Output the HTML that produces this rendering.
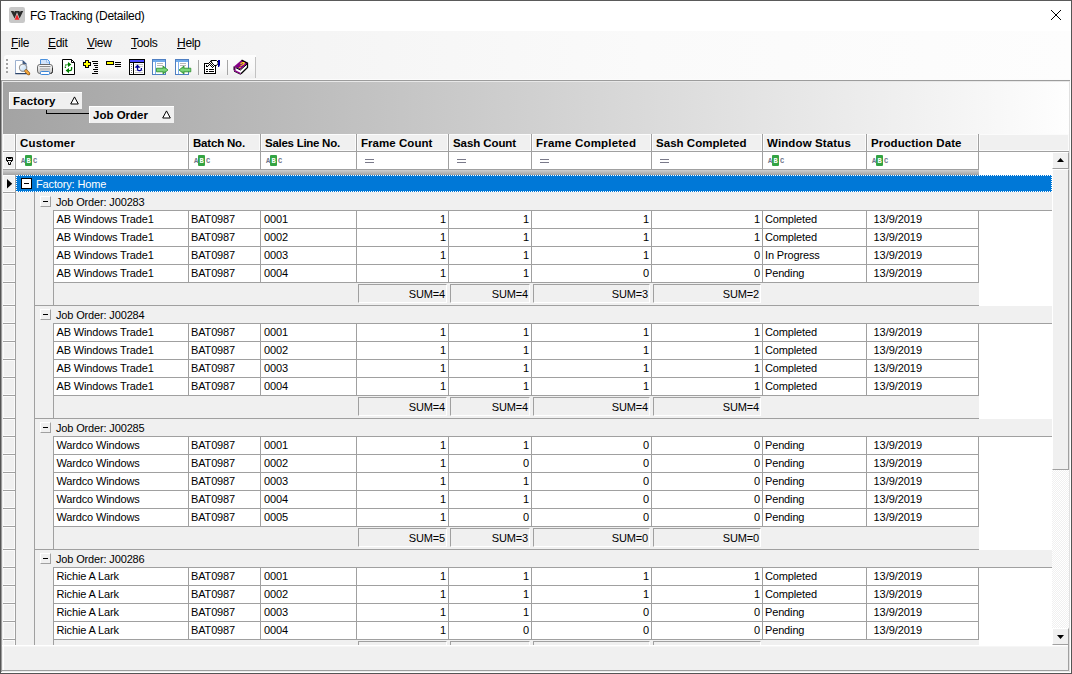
<!DOCTYPE html>
<html><head><meta charset="utf-8"><title>FG Tracking (Detailed)</title>
<style>
html,body{margin:0;padding:0;background:#fff}
#w{position:relative;width:1072px;height:674px;overflow:hidden;font-family:"Liberation Sans",sans-serif;font-size:11px;color:#000}
#w div,#w svg.a{position:absolute}
#w .t{white-space:nowrap;font-size:11px;letter-spacing:-0.15px}
#w .tb{white-space:nowrap;font-size:11.5px;font-weight:bold}
#w .ui{white-space:nowrap;font-size:12px;letter-spacing:-0.3px}
#w .abc{white-space:nowrap;font-family:"Liberation Mono",monospace;font-size:7px;line-height:11px;height:11px;color:#70748a;font-weight:bold}
#w .abc span{display:inline-block;width:4px;text-align:center;position:relative;top:1px}
#w .abc b i{font-style:normal;position:relative;top:1px}
#w .abc b{display:inline-block;width:7px;height:11px;background:#34a443;color:#fff;border-radius:1px;text-align:center;margin:0 1px 0 0}
</style></head><body><div id="w">
<div style="left:0px;top:0px;width:1072px;height:674px;background:#fff"></div>
<div style="left:1px;top:31px;width:1070px;height:49px;background:linear-gradient(90deg,#f0f0f0 0%,#f5f5f5 30%,#fafafa 60%,#fdfdfd 100%)"></div>

<svg class="a" style="left:9px;top:7px" width="16" height="16" viewBox="9 7 16 16"><rect x="9" y="7" width="16" height="16" rx="2.2" fill="#c8c8c8"/><path d="M10.8 11 H17.4 L14.6 18.6 Z M16.6 11 H23.2 L19.6 18.6 Z" fill="#2a2a2a"/><path d="M13.6 11 h1.2 l-.6 1.6z M19.4 11 h1.2 l-.6 1.6z" fill="#c8c8c8"/><path d="M17 14.2 L19.4 19.8 H14.6 Z" fill="#f0242a"/></svg>
<div class="ui" style="left:30px;top:8px;height:16px;line-height:16px;letter-spacing:-0.28px">FG Tracking (Detailed)</div>
<svg class="a" style="left:1050px;top:9px" width="12" height="12" viewBox="0 0 12 12"><path d="M1 1 L11 11 M11 1 L1 11" stroke="#000" stroke-width="1" fill="none"/></svg>


<div class="ui" style="left:11px;top:35px;height:16px;line-height:16px"><u>F</u>ile</div>
<div class="ui" style="left:48px;top:35px;height:16px;line-height:16px"><u>E</u>dit</div>
<div class="ui" style="left:87px;top:35px;height:16px;line-height:16px"><u>V</u>iew</div>
<div class="ui" style="left:131px;top:35px;height:16px;line-height:16px"><u>T</u>ools</div>
<div class="ui" style="left:177px;top:35px;height:16px;line-height:16px"><u>H</u>elp</div>

<div style="left:4px;top:55px;width:252px;height:23px;border-radius:3px 0 0 3px;background:linear-gradient(180deg,#fdfdfd,#f8f8f8 60%,#eeeeee)"></div>
<div style="left:255px;top:57px;width:1px;height:21px;background:#c2c2c2"></div>
<svg class="a" style="left:4px;top:55px" width="252" height="23" viewBox="4 55 252 23">
<defs>
<linearGradient id="gl" x1="0" y1="0" x2="1" y2="1"><stop offset="0" stop-color="#ffffff"/><stop offset="1" stop-color="#b9d9f6"/></linearGradient>
<linearGradient id="gp" x1="0" y1="0" x2="0" y2="1"><stop offset="0" stop-color="#ffffff"/><stop offset="1" stop-color="#c4c4c4"/></linearGradient>
<linearGradient id="gg" x1="0" y1="0" x2="0" y2="1"><stop offset="0" stop-color="#2f9a2f"/><stop offset=".5" stop-color="#86e086"/><stop offset="1" stop-color="#288a28"/></linearGradient>
</defs>
<!-- grip -->
<g fill="#a3a3a3"><rect x="6" y="59" width="2" height="2"/><rect x="6" y="63" width="2" height="2"/><rect x="6" y="67" width="2" height="2"/><rect x="6" y="71" width="2" height="2"/></g>
<!-- preview -->
<path d="M15.5 60.5 H23 L26.5 64 V73.5 H15.5 Z" fill="#fff" stroke="#9db1cf" stroke-width="1"/>
<path d="M15.3 73.6 H26.5 V66" fill="none" stroke="#2c456b" stroke-width="1.2"/>
<path d="M23 60.8 V64 H26.2 Z" fill="#4a6a9c" stroke="#2c456b" stroke-width=".8"/>
<circle cx="23" cy="67.8" r="3.6" fill="url(#gl)" stroke="#9a9a9a" stroke-width="1.1"/>
<path d="M26 71 L28.6 73.6" stroke="#8a5312" stroke-width="3.2" stroke-linecap="round"/>
<path d="M26 71 L28.4 73.4" stroke="#f5a83c" stroke-width="2.1" stroke-linecap="round"/>
<!-- printer -->
<path d="M40.5 66 V59.5 H47.5 L49.5 61.5 V66 Z" fill="#d3e4fa" stroke="#4a90dc" stroke-width="1"/>
<path d="M46.5 59.8 V62.2 H49.2" fill="#f2f7ff" stroke="#8db9ec" stroke-width=".8"/>
<rect x="37.5" y="64.5" width="15" height="9" rx="2.4" fill="url(#gp)" stroke="#6a6a6a" stroke-width="1"/>
<path d="M39.5 66.5 H50.5" stroke="#8a8a8a" stroke-width="1"/>
<rect x="40" y="68" width="10" height="2.4" fill="#c2c2c2"/>
<path d="M52.5 68 V71.5 Q52.5 73.5 50.5 73.5" fill="none" stroke="#333" stroke-width="1"/>
<rect x="40.5" y="71.5" width="9" height="3" rx=".8" fill="#fff" stroke="#3c86d8" stroke-width="1"/>
<!-- refresh -->
<path d="M62.5 59.5 H71.5 L74.5 62.5 V74.5 H62.5 Z" fill="#fff" stroke="#000" stroke-width="1"/>
<path d="M71.5 59.5 V62.5 H74.5" fill="none" stroke="#000" stroke-width="1"/>
<g fill="none" stroke="#008000" stroke-width="1.3"><path d="M65.4 68 V66 Q65.4 64.5 67 64.5 H68.5" stroke-dasharray="1.6 .7"/><path d="M71.6 67 V69 Q71.6 70.6 70 70.6 H68.5"/></g>
<path d="M68 62 L71.4 64.5 L68 67 Z" fill="#008000"/><path d="M69 68 L65.6 70.6 L69 73.2 Z" fill="#008000"/>
<!-- expand -->
<path d="M85 60 h4 v2 h2 v4 h-2 v2 h-4 v-2 h-2 v-4 h2 z" fill="#000"/><path d="M86 61 h2 v2 h2 v2 h-2 v2 h-2 v-2 h-2 v-2 h2 z" fill="#ffff00"/>
<g fill="#000"><rect x="92" y="61" width="6" height="1"/><rect x="93" y="63" width="5" height="1"/><rect x="94" y="65" width="4" height="1"/><rect x="95" y="67" width="3" height="1"/><rect x="93" y="69" width="5" height="1"/><rect x="94" y="71" width="4" height="1"/><rect x="92" y="73" width="6" height="1"/></g>
<!-- collapse -->
<rect x="106" y="61" width="8" height="4" fill="#000"/><rect x="107" y="62" width="6" height="2" fill="#ffff00"/>
<g fill="#000"><rect x="115" y="62" width="6" height="1"/><rect x="115" y="64" width="6" height="1"/><rect x="115" y="66" width="6" height="1"/></g>
<!-- window -->
<rect x="129.5" y="59.5" width="15" height="15" fill="#fff" stroke="#000" stroke-width="1"/>
<rect x="130" y="60" width="14" height="2" fill="#4a4aff"/><rect x="130" y="62" width="14" height="1" fill="#000"/><rect x="133" y="62" width="1" height="12" fill="#000"/>
<g fill="#777"><rect x="131" y="64" width="1" height="1"/><rect x="131" y="66" width="1" height="1"/><rect x="131" y="68" width="1" height="1"/><rect x="131" y="70" width="1" height="1"/><rect x="131" y="72" width="1" height="1"/></g>
<g fill="#c8c8c8"><rect x="135" y="64" width="8" height="1"/><rect x="135" y="66" width="8" height="1"/><rect x="135" y="70" width="8" height="1"/><rect x="135" y="72" width="8" height="1"/></g>
<path d="M134.6 67.8 L137.5 64.6 L140.4 67.8 Z" fill="#00009a"/><path d="M137.5 67 V69.2 Q137.5 70.6 139 70.6 H140 Q141.4 70.6 141.4 69 V68" fill="none" stroke="#00009a" stroke-width="1.3"/>
<!-- doc right -->
<rect x="152.5" y="59.5" width="13" height="15" fill="#fff" stroke="#4f7fc2" stroke-width="1"/>
<rect x="153" y="60" width="12" height="2" fill="#6faaea"/><rect x="155" y="62" width="1" height="12" fill="#7fb0ea"/>
<rect x="157" y="63" width="6" height="1" fill="#b9b9b9"/><rect x="157" y="65" width="6" height="1" fill="#b9b9b9"/>
<path d="M156.5 68.2 H163 V66 L168 70 L163 74 V71.8 H156.5 Z" fill="url(#gg)" stroke="#2c8e2c" stroke-width=".8"/>
<!-- doc left -->
<rect x="175.5" y="59.5" width="13" height="15" fill="#fff" stroke="#4f7fc2" stroke-width="1"/>
<rect x="176" y="60" width="12" height="2" fill="#6faaea"/><rect x="178" y="62" width="1" height="12" fill="#7fb0ea"/>
<rect x="180" y="63" width="6" height="1" fill="#b9b9b9"/><rect x="180" y="65" width="6" height="1" fill="#b9b9b9"/>
<path d="M190.8 68.2 H184 V66 L179 70 L184 74 V71.8 H190.8 Z" fill="url(#gg)" stroke="#2c8e2c" stroke-width=".8"/>
<!-- sep -->
<rect x="198" y="60" width="1" height="15" fill="#a6a6a6"/><rect x="227" y="60" width="1" height="15" fill="#a6a6a6"/>
<!-- properties -->
<rect x="204.5" y="63.5" width="11" height="10" fill="#fff" stroke="#000" stroke-width="1"/>
<g fill="#000"><rect x="206" y="69" width="2" height="1"/><rect x="209" y="69" width="5" height="1"/><rect x="206" y="71" width="2" height="1"/><rect x="209" y="71" width="5" height="1"/><rect x="206" y="65" width="1" height="2"/><rect x="206" y="66" width="2" height="1"/></g>
<path d="M211 60.5 H216.5 L218 62 V63.5 L216.5 65.5 H213 Z" fill="#fff" stroke="#000" stroke-width="1"/>
<path d="M207.5 65 L210.5 61 L215 65.5 L212.5 68.2 L209.5 65.5 L208.5 66.5 Z" fill="#fff"/><g fill="#000" shape-rendering="crispEdges"><rect x="210" y="61" width="1" height="1"/><rect x="209" y="62" width="1" height="1"/><rect x="211" y="62" width="1" height="1"/><rect x="208" y="63" width="1" height="1"/><rect x="210" y="63" width="1" height="1"/><rect x="212" y="63" width="1" height="1"/><rect x="209" y="64" width="1" height="1"/><rect x="211" y="64" width="1" height="1"/><rect x="213" y="64" width="1" height="1"/><rect x="208" y="65" width="1" height="1"/><rect x="210" y="65" width="1" height="1"/><rect x="212" y="65" width="1" height="1"/><rect x="214" y="65" width="1" height="1"/><rect x="211" y="66" width="1" height="1"/><rect x="213" y="66" width="1" height="1"/><rect x="212" y="67" width="1" height="1"/></g>
<path d="M218 60 h2 v5 l-1 2 h-1 z" fill="#0000a0"/>
<!-- book -->
<path d="M234.5 70 L240.8 73.6 L247.6 67.4 V63.5 L240.3 69.6 L235.2 67.2 Z" fill="#fff"/>
<path d="M234 66.4 L241.6 60 L248 63 L240.4 69.6 Z" fill="#870087"/>
<path d="M233.8 66.4 L235.6 67.4 V70.6 L233.8 69.8 Z" fill="#870087"/>
<path d="M241.6 60.2 L247.5 63.2 V67.4 L241 73.8" fill="none" stroke="#000" stroke-width="1.3"/><path d="M234 71.2 L240.8 74.4" stroke="#000" stroke-width=".9"/>
<path d="M235.6 67.6 L240.4 70 L247.6 63.6" fill="none" stroke="#000" stroke-width="1"/>
<path d="M234 66.4 V70.4" stroke="#000" stroke-width=".8"/>
<path d="M234.2 70.4 L240.6 73.6" stroke="#870087" stroke-width="1.3"/>
<text x="0" y="0" font-family="Liberation Sans, sans-serif" font-weight="bold" font-size="8.5" fill="#ffee00" transform="translate(237 68) skewX(-32)">?</text>
</svg>

<div style="left:1px;top:79px;width:1070px;height:1px;background:#fcfcfc"></div>
<div style="left:1px;top:80px;width:1069px;height:1px;background:#9c9c9c"></div>
<div style="left:2px;top:81px;width:1067px;height:1px;background:#e8e8e8"></div>
<div style="left:2px;top:81px;width:1px;height:590px;background:#ececec"></div>
<div style="left:3px;top:82px;width:1066px;height:52px;background:linear-gradient(90deg,#a3a3a3 0%,#fefefe 100%)"></div>
<div style="left:9px;top:92px;width:73px;height:17px;background:#f0f0f0;border-top:1px solid #fff;border-left:1px solid #fff;box-sizing:border-box"></div>
<div style="left:89px;top:106px;width:85px;height:17px;background:#f0f0f0;border-top:1px solid #fff;border-left:1px solid #fff;box-sizing:border-box"></div>
<div class="tb" style="left:13px;top:93px;height:16px;line-height:16px;letter-spacing:0.15px">Factory</div>
<div class="tb" style="left:93px;top:107px;height:16px;line-height:16px;">Job Order</div>
<svg class="a" style="left:70px;top:96px" width="9" height="9" viewBox="0 0 9 9"><path d="M4.5 .9 L8.3 8 H.7 Z" fill="#fff" stroke="#000" stroke-width="1"/></svg>
<svg class="a" style="left:162px;top:110px" width="9" height="9" viewBox="0 0 9 9"><path d="M4.5 .9 L8.3 8 H.7 Z" fill="#fff" stroke="#000" stroke-width="1"/></svg>
<div style="left:46px;top:110px;width:1px;height:4px;background:#000"></div>
<div style="left:46px;top:113px;width:43px;height:1px;background:#000"></div>
<div style="left:3px;top:134px;width:1066px;height:17px;background:#f0f0f0"></div>
<div style="left:3px;top:151px;width:1066px;height:1px;background:#a0a0a0"></div>
<div style="left:15px;top:134px;width:1px;height:18px;background:#a0a0a0"></div>
<div style="left:3px;top:134px;width:12px;height:17px;border:1px solid #fbfbfb;box-sizing:border-box"></div>
<div style="left:16px;top:134px;width:172px;height:17px;border:1px solid #fbfbfb;box-sizing:border-box"></div>
<div style="left:188px;top:134px;width:1px;height:18px;background:#a0a0a0"></div>
<div class="tb" style="left:20px;top:135px;height:16px;line-height:16px;letter-spacing:0.17px">Customer</div>
<div style="left:189px;top:134px;width:71px;height:17px;border:1px solid #fbfbfb;box-sizing:border-box"></div>
<div style="left:260px;top:134px;width:1px;height:18px;background:#a0a0a0"></div>
<div class="tb" style="left:193px;top:135px;height:16px;line-height:16px;letter-spacing:-0.2px">Batch No.</div>
<div style="left:261px;top:134px;width:95px;height:17px;border:1px solid #fbfbfb;box-sizing:border-box"></div>
<div style="left:356px;top:134px;width:1px;height:18px;background:#a0a0a0"></div>
<div class="tb" style="left:265px;top:135px;height:16px;line-height:16px;letter-spacing:-0.27px">Sales Line No.</div>
<div style="left:357px;top:134px;width:91px;height:17px;border:1px solid #fbfbfb;box-sizing:border-box"></div>
<div style="left:448px;top:134px;width:1px;height:18px;background:#a0a0a0"></div>
<div class="tb" style="left:361px;top:135px;height:16px;line-height:16px;letter-spacing:0.05px">Frame Count</div>
<div style="left:449px;top:134px;width:82px;height:17px;border:1px solid #fbfbfb;box-sizing:border-box"></div>
<div style="left:531px;top:134px;width:1px;height:18px;background:#a0a0a0"></div>
<div class="tb" style="left:453px;top:135px;height:16px;line-height:16px;letter-spacing:-0.09px">Sash Count</div>
<div style="left:532px;top:134px;width:119px;height:17px;border:1px solid #fbfbfb;box-sizing:border-box"></div>
<div style="left:651px;top:134px;width:1px;height:18px;background:#a0a0a0"></div>
<div class="tb" style="left:536px;top:135px;height:16px;line-height:16px;letter-spacing:0.2px">Frame Completed</div>
<div style="left:652px;top:134px;width:110px;height:17px;border:1px solid #fbfbfb;box-sizing:border-box"></div>
<div style="left:762px;top:134px;width:1px;height:18px;background:#a0a0a0"></div>
<div class="tb" style="left:656px;top:135px;height:16px;line-height:16px;letter-spacing:0.03px">Sash Completed</div>
<div style="left:763px;top:134px;width:103px;height:17px;border:1px solid #fbfbfb;box-sizing:border-box"></div>
<div style="left:866px;top:134px;width:1px;height:18px;background:#a0a0a0"></div>
<div class="tb" style="left:767px;top:135px;height:16px;line-height:16px;letter-spacing:0.13px">Window Status</div>
<div style="left:867px;top:134px;width:111px;height:17px;border:1px solid #fbfbfb;box-sizing:border-box"></div>
<div style="left:978px;top:134px;width:1px;height:18px;background:#a0a0a0"></div>
<div class="tb" style="left:871px;top:135px;height:16px;line-height:16px;letter-spacing:0.12px">Production Date</div>
<div style="left:979px;top:134px;width:90px;height:17px;border:1px solid #fbfbfb;box-sizing:border-box"></div>
<div style="left:3px;top:152px;width:1049px;height:23px;background:#fff"></div>
<div style="left:3px;top:152px;width:12px;height:17px;background:#f0f0f0;border:1px solid #fbfbfb;box-sizing:border-box"></div>
<div style="left:15px;top:152px;width:1px;height:18px;background:#a0a0a0"></div>
<div style="left:3px;top:169px;width:976px;height:1px;background:#a0a0a0"></div>
<div style="left:3px;top:170px;width:976px;height:5px;background:linear-gradient(180deg,#cfcfcf,#a2a2a2)"></div>
<div style="left:188px;top:152px;width:1px;height:18px;background:#a0a0a0"></div>
<div class="abc" style="left:21px;top:155px"><span>A</span><b><i>B</i></b><span>C</span></div>
<div style="left:260px;top:152px;width:1px;height:18px;background:#a0a0a0"></div>
<div class="abc" style="left:194px;top:155px"><span>A</span><b><i>B</i></b><span>C</span></div>
<div style="left:356px;top:152px;width:1px;height:18px;background:#a0a0a0"></div>
<div class="abc" style="left:266px;top:155px"><span>A</span><b><i>B</i></b><span>C</span></div>
<div style="left:448px;top:152px;width:1px;height:18px;background:#a0a0a0"></div>
<div style="left:365px;top:159px;width:9px;height:1px;background:#7a7a8a"></div>
<div style="left:365px;top:162px;width:9px;height:1px;background:#7a7a8a"></div>
<div style="left:531px;top:152px;width:1px;height:18px;background:#a0a0a0"></div>
<div style="left:457px;top:159px;width:9px;height:1px;background:#7a7a8a"></div>
<div style="left:457px;top:162px;width:9px;height:1px;background:#7a7a8a"></div>
<div style="left:651px;top:152px;width:1px;height:18px;background:#a0a0a0"></div>
<div style="left:540px;top:159px;width:9px;height:1px;background:#7a7a8a"></div>
<div style="left:540px;top:162px;width:9px;height:1px;background:#7a7a8a"></div>
<div style="left:762px;top:152px;width:1px;height:18px;background:#a0a0a0"></div>
<div style="left:660px;top:159px;width:9px;height:1px;background:#7a7a8a"></div>
<div style="left:660px;top:162px;width:9px;height:1px;background:#7a7a8a"></div>
<div style="left:866px;top:152px;width:1px;height:18px;background:#a0a0a0"></div>
<div class="abc" style="left:768px;top:155px"><span>A</span><b><i>B</i></b><span>C</span></div>
<div style="left:978px;top:152px;width:1px;height:18px;background:#a0a0a0"></div>
<div class="abc" style="left:872px;top:155px"><span>A</span><b><i>B</i></b><span>C</span></div>
<svg class="a" style="left:6px;top:157px" width="7" height="8" viewBox="0 0 7 8"><path d="M.5 .5h6v3h-6z M2 1.5h3.5 M.5 3.5 L2.5 5.5 V7.5 H4.5 V5.5 L6.5 3.5" fill="none" stroke="#000" stroke-width="1"/></svg>
<div style="left:16px;top:192px;width:1036px;height:1px;background:#f0f0f0"></div>
<div style="left:16px;top:175px;width:1036px;height:17px;background:#0078d7;outline:1px dotted #fff;outline-offset:-1px"></div>
<div style="left:3px;top:175px;width:12px;height:17px;background:#f0f0f0;border:1px solid #fbfbfb;box-sizing:border-box"></div>
<div style="left:3px;top:192px;width:13px;height:1px;background:#a0a0a0"></div>
<svg class="a" style="left:7px;top:179px" width="6" height="10" viewBox="0 0 6 10"><path d="M0 0 L5.2 4.75 L0 9.5Z" fill="#000"/></svg>
<div style="left:21px;top:178px;width:11px;height:11px;background:#fff;border:1px solid #000;box-sizing:border-box"></div>
<div style="left:24px;top:183px;width:5px;height:1px;background:#000"></div>
<div class="t" style="left:36px;top:176px;height:17px;line-height:17px;color:#fff">Factory: Home</div>
<div style="left:15px;top:175px;width:1px;height:470px;background:#a0a0a0"></div>
<div style="left:16px;top:193px;width:19px;height:452px;background:#f0f0f0"></div>
<div style="left:34px;top:192px;width:1px;height:453px;background:#a0a0a0"></div>
<div style="left:35px;top:193px;width:1017px;height:17px;background:#f0f0f0"></div>
<div style="left:3px;top:193px;width:12px;height:17px;background:#f0f0f0;border:1px solid #fbfbfb;box-sizing:border-box"></div>
<div style="left:3px;top:210px;width:13px;height:1px;background:#a0a0a0"></div>
<div style="left:40px;top:196px;width:11px;height:11px;background:#f0f0f0;border-top:1px solid #fff;border-left:1px solid #fff;border-right:1px solid #a0a0a0;border-bottom:1px solid #a0a0a0;box-sizing:border-box"></div>
<div style="left:43px;top:201px;width:5px;height:1px;background:#000"></div>
<div class="t" style="left:56px;top:194px;height:17px;line-height:17px;">Job Order: J00283</div>
<div style="left:54px;top:210px;width:998px;height:1px;background:#a0a0a0"></div>
<div style="left:3px;top:211px;width:12px;height:17px;background:#f0f0f0;border:1px solid #fbfbfb;box-sizing:border-box"></div>
<div style="left:3px;top:228px;width:13px;height:1px;background:#a0a0a0"></div>
<div class="t" style="left:56.5px;top:211px;height:17px;line-height:17px;">AB Windows Trade1</div>
<div class="t" style="left:191px;top:211px;height:17px;line-height:17px;">BAT0987</div>
<div class="t" style="left:264px;top:211px;height:17px;line-height:17px;">0001</div>
<div class="t" style="right:626px;top:211px;height:17px;line-height:17px;text-align:right;">1</div>
<div class="t" style="right:543px;top:211px;height:17px;line-height:17px;text-align:right;">1</div>
<div class="t" style="right:423px;top:211px;height:17px;line-height:17px;text-align:right;">1</div>
<div class="t" style="right:312px;top:211px;height:17px;line-height:17px;text-align:right;">1</div>
<div class="t" style="left:765px;top:211px;height:17px;line-height:17px;">Completed</div>
<div class="t" style="left:873.5px;top:211px;height:17px;line-height:17px;letter-spacing:-0.05px">13/9/2019</div>
<div style="left:54px;top:228px;width:925px;height:1px;background:#a0a0a0"></div>
<div style="left:3px;top:229px;width:12px;height:17px;background:#f0f0f0;border:1px solid #fbfbfb;box-sizing:border-box"></div>
<div style="left:3px;top:246px;width:13px;height:1px;background:#a0a0a0"></div>
<div class="t" style="left:56.5px;top:229px;height:17px;line-height:17px;">AB Windows Trade1</div>
<div class="t" style="left:191px;top:229px;height:17px;line-height:17px;">BAT0987</div>
<div class="t" style="left:264px;top:229px;height:17px;line-height:17px;">0002</div>
<div class="t" style="right:626px;top:229px;height:17px;line-height:17px;text-align:right;">1</div>
<div class="t" style="right:543px;top:229px;height:17px;line-height:17px;text-align:right;">1</div>
<div class="t" style="right:423px;top:229px;height:17px;line-height:17px;text-align:right;">1</div>
<div class="t" style="right:312px;top:229px;height:17px;line-height:17px;text-align:right;">1</div>
<div class="t" style="left:765px;top:229px;height:17px;line-height:17px;">Completed</div>
<div class="t" style="left:873.5px;top:229px;height:17px;line-height:17px;letter-spacing:-0.05px">13/9/2019</div>
<div style="left:54px;top:246px;width:925px;height:1px;background:#a0a0a0"></div>
<div style="left:3px;top:247px;width:12px;height:17px;background:#f0f0f0;border:1px solid #fbfbfb;box-sizing:border-box"></div>
<div style="left:3px;top:264px;width:13px;height:1px;background:#a0a0a0"></div>
<div class="t" style="left:56.5px;top:247px;height:17px;line-height:17px;">AB Windows Trade1</div>
<div class="t" style="left:191px;top:247px;height:17px;line-height:17px;">BAT0987</div>
<div class="t" style="left:264px;top:247px;height:17px;line-height:17px;">0003</div>
<div class="t" style="right:626px;top:247px;height:17px;line-height:17px;text-align:right;">1</div>
<div class="t" style="right:543px;top:247px;height:17px;line-height:17px;text-align:right;">1</div>
<div class="t" style="right:423px;top:247px;height:17px;line-height:17px;text-align:right;">1</div>
<div class="t" style="right:312px;top:247px;height:17px;line-height:17px;text-align:right;">0</div>
<div class="t" style="left:765px;top:247px;height:17px;line-height:17px;">In Progress</div>
<div class="t" style="left:873.5px;top:247px;height:17px;line-height:17px;letter-spacing:-0.05px">13/9/2019</div>
<div style="left:54px;top:264px;width:925px;height:1px;background:#a0a0a0"></div>
<div style="left:3px;top:265px;width:12px;height:17px;background:#f0f0f0;border:1px solid #fbfbfb;box-sizing:border-box"></div>
<div style="left:3px;top:282px;width:13px;height:1px;background:#a0a0a0"></div>
<div class="t" style="left:56.5px;top:265px;height:17px;line-height:17px;">AB Windows Trade1</div>
<div class="t" style="left:191px;top:265px;height:17px;line-height:17px;">BAT0987</div>
<div class="t" style="left:264px;top:265px;height:17px;line-height:17px;">0004</div>
<div class="t" style="right:626px;top:265px;height:17px;line-height:17px;text-align:right;">1</div>
<div class="t" style="right:543px;top:265px;height:17px;line-height:17px;text-align:right;">1</div>
<div class="t" style="right:423px;top:265px;height:17px;line-height:17px;text-align:right;">0</div>
<div class="t" style="right:312px;top:265px;height:17px;line-height:17px;text-align:right;">0</div>
<div class="t" style="left:765px;top:265px;height:17px;line-height:17px;">Pending</div>
<div class="t" style="left:873.5px;top:265px;height:17px;line-height:17px;letter-spacing:-0.05px">13/9/2019</div>
<div style="left:54px;top:282px;width:925px;height:1px;background:#a0a0a0"></div>
<div style="left:188px;top:211px;width:1px;height:72px;background:#a0a0a0"></div>
<div style="left:260px;top:211px;width:1px;height:72px;background:#a0a0a0"></div>
<div style="left:356px;top:211px;width:1px;height:72px;background:#a0a0a0"></div>
<div style="left:448px;top:211px;width:1px;height:72px;background:#a0a0a0"></div>
<div style="left:531px;top:211px;width:1px;height:72px;background:#a0a0a0"></div>
<div style="left:651px;top:211px;width:1px;height:72px;background:#a0a0a0"></div>
<div style="left:762px;top:211px;width:1px;height:72px;background:#a0a0a0"></div>
<div style="left:866px;top:211px;width:1px;height:72px;background:#a0a0a0"></div>
<div style="left:978px;top:211px;width:1px;height:72px;background:#a0a0a0"></div>
<div style="left:54px;top:283px;width:925px;height:22px;background:#f0f0f0"></div>
<div style="left:3px;top:283px;width:12px;height:22px;background:#f0f0f0;border:1px solid #fbfbfb;box-sizing:border-box"></div>
<div style="left:3px;top:305px;width:13px;height:1px;background:#a0a0a0"></div>
<div style="left:358px;top:284px;width:89px;height:19px;background:#f0f0f0;border-top:1px solid #a0a0a0;border-left:1px solid #a0a0a0;border-right:1px solid #fff;border-bottom:1px solid #fff;box-sizing:border-box"></div>
<div class="t" style="right:627px;top:286px;height:17px;line-height:17px;text-align:right;">SUM=4</div>
<div style="left:450px;top:284px;width:80px;height:19px;background:#f0f0f0;border-top:1px solid #a0a0a0;border-left:1px solid #a0a0a0;border-right:1px solid #fff;border-bottom:1px solid #fff;box-sizing:border-box"></div>
<div class="t" style="right:544px;top:286px;height:17px;line-height:17px;text-align:right;">SUM=4</div>
<div style="left:533px;top:284px;width:117px;height:19px;background:#f0f0f0;border-top:1px solid #a0a0a0;border-left:1px solid #a0a0a0;border-right:1px solid #fff;border-bottom:1px solid #fff;box-sizing:border-box"></div>
<div class="t" style="right:424px;top:286px;height:17px;line-height:17px;text-align:right;">SUM=3</div>
<div style="left:653px;top:284px;width:108px;height:19px;background:#f0f0f0;border-top:1px solid #a0a0a0;border-left:1px solid #a0a0a0;border-right:1px solid #fff;border-bottom:1px solid #fff;box-sizing:border-box"></div>
<div class="t" style="right:313px;top:286px;height:17px;line-height:17px;text-align:right;">SUM=2</div>
<div style="left:35px;top:305px;width:944px;height:1px;background:#a0a0a0"></div>
<div style="left:35px;top:210px;width:18px;height:95px;background:#f0f0f0"></div>
<div style="left:53px;top:210px;width:1px;height:95px;background:#a0a0a0"></div>
<div style="left:35px;top:306px;width:1017px;height:17px;background:#f0f0f0"></div>
<div style="left:3px;top:306px;width:12px;height:17px;background:#f0f0f0;border:1px solid #fbfbfb;box-sizing:border-box"></div>
<div style="left:3px;top:323px;width:13px;height:1px;background:#a0a0a0"></div>
<div style="left:40px;top:309px;width:11px;height:11px;background:#f0f0f0;border-top:1px solid #fff;border-left:1px solid #fff;border-right:1px solid #a0a0a0;border-bottom:1px solid #a0a0a0;box-sizing:border-box"></div>
<div style="left:43px;top:314px;width:5px;height:1px;background:#000"></div>
<div class="t" style="left:56px;top:307px;height:17px;line-height:17px;">Job Order: J00284</div>
<div style="left:54px;top:323px;width:998px;height:1px;background:#a0a0a0"></div>
<div style="left:3px;top:324px;width:12px;height:17px;background:#f0f0f0;border:1px solid #fbfbfb;box-sizing:border-box"></div>
<div style="left:3px;top:341px;width:13px;height:1px;background:#a0a0a0"></div>
<div class="t" style="left:56.5px;top:324px;height:17px;line-height:17px;">AB Windows Trade1</div>
<div class="t" style="left:191px;top:324px;height:17px;line-height:17px;">BAT0987</div>
<div class="t" style="left:264px;top:324px;height:17px;line-height:17px;">0001</div>
<div class="t" style="right:626px;top:324px;height:17px;line-height:17px;text-align:right;">1</div>
<div class="t" style="right:543px;top:324px;height:17px;line-height:17px;text-align:right;">1</div>
<div class="t" style="right:423px;top:324px;height:17px;line-height:17px;text-align:right;">1</div>
<div class="t" style="right:312px;top:324px;height:17px;line-height:17px;text-align:right;">1</div>
<div class="t" style="left:765px;top:324px;height:17px;line-height:17px;">Completed</div>
<div class="t" style="left:873.5px;top:324px;height:17px;line-height:17px;letter-spacing:-0.05px">13/9/2019</div>
<div style="left:54px;top:341px;width:925px;height:1px;background:#a0a0a0"></div>
<div style="left:3px;top:342px;width:12px;height:17px;background:#f0f0f0;border:1px solid #fbfbfb;box-sizing:border-box"></div>
<div style="left:3px;top:359px;width:13px;height:1px;background:#a0a0a0"></div>
<div class="t" style="left:56.5px;top:342px;height:17px;line-height:17px;">AB Windows Trade1</div>
<div class="t" style="left:191px;top:342px;height:17px;line-height:17px;">BAT0987</div>
<div class="t" style="left:264px;top:342px;height:17px;line-height:17px;">0002</div>
<div class="t" style="right:626px;top:342px;height:17px;line-height:17px;text-align:right;">1</div>
<div class="t" style="right:543px;top:342px;height:17px;line-height:17px;text-align:right;">1</div>
<div class="t" style="right:423px;top:342px;height:17px;line-height:17px;text-align:right;">1</div>
<div class="t" style="right:312px;top:342px;height:17px;line-height:17px;text-align:right;">1</div>
<div class="t" style="left:765px;top:342px;height:17px;line-height:17px;">Completed</div>
<div class="t" style="left:873.5px;top:342px;height:17px;line-height:17px;letter-spacing:-0.05px">13/9/2019</div>
<div style="left:54px;top:359px;width:925px;height:1px;background:#a0a0a0"></div>
<div style="left:3px;top:360px;width:12px;height:17px;background:#f0f0f0;border:1px solid #fbfbfb;box-sizing:border-box"></div>
<div style="left:3px;top:377px;width:13px;height:1px;background:#a0a0a0"></div>
<div class="t" style="left:56.5px;top:360px;height:17px;line-height:17px;">AB Windows Trade1</div>
<div class="t" style="left:191px;top:360px;height:17px;line-height:17px;">BAT0987</div>
<div class="t" style="left:264px;top:360px;height:17px;line-height:17px;">0003</div>
<div class="t" style="right:626px;top:360px;height:17px;line-height:17px;text-align:right;">1</div>
<div class="t" style="right:543px;top:360px;height:17px;line-height:17px;text-align:right;">1</div>
<div class="t" style="right:423px;top:360px;height:17px;line-height:17px;text-align:right;">1</div>
<div class="t" style="right:312px;top:360px;height:17px;line-height:17px;text-align:right;">1</div>
<div class="t" style="left:765px;top:360px;height:17px;line-height:17px;">Completed</div>
<div class="t" style="left:873.5px;top:360px;height:17px;line-height:17px;letter-spacing:-0.05px">13/9/2019</div>
<div style="left:54px;top:377px;width:925px;height:1px;background:#a0a0a0"></div>
<div style="left:3px;top:378px;width:12px;height:17px;background:#f0f0f0;border:1px solid #fbfbfb;box-sizing:border-box"></div>
<div style="left:3px;top:395px;width:13px;height:1px;background:#a0a0a0"></div>
<div class="t" style="left:56.5px;top:378px;height:17px;line-height:17px;">AB Windows Trade1</div>
<div class="t" style="left:191px;top:378px;height:17px;line-height:17px;">BAT0987</div>
<div class="t" style="left:264px;top:378px;height:17px;line-height:17px;">0004</div>
<div class="t" style="right:626px;top:378px;height:17px;line-height:17px;text-align:right;">1</div>
<div class="t" style="right:543px;top:378px;height:17px;line-height:17px;text-align:right;">1</div>
<div class="t" style="right:423px;top:378px;height:17px;line-height:17px;text-align:right;">1</div>
<div class="t" style="right:312px;top:378px;height:17px;line-height:17px;text-align:right;">1</div>
<div class="t" style="left:765px;top:378px;height:17px;line-height:17px;">Completed</div>
<div class="t" style="left:873.5px;top:378px;height:17px;line-height:17px;letter-spacing:-0.05px">13/9/2019</div>
<div style="left:54px;top:395px;width:925px;height:1px;background:#a0a0a0"></div>
<div style="left:188px;top:324px;width:1px;height:72px;background:#a0a0a0"></div>
<div style="left:260px;top:324px;width:1px;height:72px;background:#a0a0a0"></div>
<div style="left:356px;top:324px;width:1px;height:72px;background:#a0a0a0"></div>
<div style="left:448px;top:324px;width:1px;height:72px;background:#a0a0a0"></div>
<div style="left:531px;top:324px;width:1px;height:72px;background:#a0a0a0"></div>
<div style="left:651px;top:324px;width:1px;height:72px;background:#a0a0a0"></div>
<div style="left:762px;top:324px;width:1px;height:72px;background:#a0a0a0"></div>
<div style="left:866px;top:324px;width:1px;height:72px;background:#a0a0a0"></div>
<div style="left:978px;top:324px;width:1px;height:72px;background:#a0a0a0"></div>
<div style="left:54px;top:396px;width:925px;height:22px;background:#f0f0f0"></div>
<div style="left:3px;top:396px;width:12px;height:22px;background:#f0f0f0;border:1px solid #fbfbfb;box-sizing:border-box"></div>
<div style="left:3px;top:418px;width:13px;height:1px;background:#a0a0a0"></div>
<div style="left:358px;top:397px;width:89px;height:19px;background:#f0f0f0;border-top:1px solid #a0a0a0;border-left:1px solid #a0a0a0;border-right:1px solid #fff;border-bottom:1px solid #fff;box-sizing:border-box"></div>
<div class="t" style="right:627px;top:399px;height:17px;line-height:17px;text-align:right;">SUM=4</div>
<div style="left:450px;top:397px;width:80px;height:19px;background:#f0f0f0;border-top:1px solid #a0a0a0;border-left:1px solid #a0a0a0;border-right:1px solid #fff;border-bottom:1px solid #fff;box-sizing:border-box"></div>
<div class="t" style="right:544px;top:399px;height:17px;line-height:17px;text-align:right;">SUM=4</div>
<div style="left:533px;top:397px;width:117px;height:19px;background:#f0f0f0;border-top:1px solid #a0a0a0;border-left:1px solid #a0a0a0;border-right:1px solid #fff;border-bottom:1px solid #fff;box-sizing:border-box"></div>
<div class="t" style="right:424px;top:399px;height:17px;line-height:17px;text-align:right;">SUM=4</div>
<div style="left:653px;top:397px;width:108px;height:19px;background:#f0f0f0;border-top:1px solid #a0a0a0;border-left:1px solid #a0a0a0;border-right:1px solid #fff;border-bottom:1px solid #fff;box-sizing:border-box"></div>
<div class="t" style="right:313px;top:399px;height:17px;line-height:17px;text-align:right;">SUM=4</div>
<div style="left:35px;top:418px;width:944px;height:1px;background:#a0a0a0"></div>
<div style="left:35px;top:323px;width:18px;height:95px;background:#f0f0f0"></div>
<div style="left:53px;top:323px;width:1px;height:95px;background:#a0a0a0"></div>
<div style="left:35px;top:419px;width:1017px;height:17px;background:#f0f0f0"></div>
<div style="left:3px;top:419px;width:12px;height:17px;background:#f0f0f0;border:1px solid #fbfbfb;box-sizing:border-box"></div>
<div style="left:3px;top:436px;width:13px;height:1px;background:#a0a0a0"></div>
<div style="left:40px;top:422px;width:11px;height:11px;background:#f0f0f0;border-top:1px solid #fff;border-left:1px solid #fff;border-right:1px solid #a0a0a0;border-bottom:1px solid #a0a0a0;box-sizing:border-box"></div>
<div style="left:43px;top:427px;width:5px;height:1px;background:#000"></div>
<div class="t" style="left:56px;top:420px;height:17px;line-height:17px;">Job Order: J00285</div>
<div style="left:54px;top:436px;width:998px;height:1px;background:#a0a0a0"></div>
<div style="left:3px;top:437px;width:12px;height:17px;background:#f0f0f0;border:1px solid #fbfbfb;box-sizing:border-box"></div>
<div style="left:3px;top:454px;width:13px;height:1px;background:#a0a0a0"></div>
<div class="t" style="left:56.5px;top:437px;height:17px;line-height:17px;">Wardco Windows</div>
<div class="t" style="left:191px;top:437px;height:17px;line-height:17px;">BAT0987</div>
<div class="t" style="left:264px;top:437px;height:17px;line-height:17px;">0001</div>
<div class="t" style="right:626px;top:437px;height:17px;line-height:17px;text-align:right;">1</div>
<div class="t" style="right:543px;top:437px;height:17px;line-height:17px;text-align:right;">1</div>
<div class="t" style="right:423px;top:437px;height:17px;line-height:17px;text-align:right;">0</div>
<div class="t" style="right:312px;top:437px;height:17px;line-height:17px;text-align:right;">0</div>
<div class="t" style="left:765px;top:437px;height:17px;line-height:17px;">Pending</div>
<div class="t" style="left:873.5px;top:437px;height:17px;line-height:17px;letter-spacing:-0.05px">13/9/2019</div>
<div style="left:54px;top:454px;width:925px;height:1px;background:#a0a0a0"></div>
<div style="left:3px;top:455px;width:12px;height:17px;background:#f0f0f0;border:1px solid #fbfbfb;box-sizing:border-box"></div>
<div style="left:3px;top:472px;width:13px;height:1px;background:#a0a0a0"></div>
<div class="t" style="left:56.5px;top:455px;height:17px;line-height:17px;">Wardco Windows</div>
<div class="t" style="left:191px;top:455px;height:17px;line-height:17px;">BAT0987</div>
<div class="t" style="left:264px;top:455px;height:17px;line-height:17px;">0002</div>
<div class="t" style="right:626px;top:455px;height:17px;line-height:17px;text-align:right;">1</div>
<div class="t" style="right:543px;top:455px;height:17px;line-height:17px;text-align:right;">0</div>
<div class="t" style="right:423px;top:455px;height:17px;line-height:17px;text-align:right;">0</div>
<div class="t" style="right:312px;top:455px;height:17px;line-height:17px;text-align:right;">0</div>
<div class="t" style="left:765px;top:455px;height:17px;line-height:17px;">Pending</div>
<div class="t" style="left:873.5px;top:455px;height:17px;line-height:17px;letter-spacing:-0.05px">13/9/2019</div>
<div style="left:54px;top:472px;width:925px;height:1px;background:#a0a0a0"></div>
<div style="left:3px;top:473px;width:12px;height:17px;background:#f0f0f0;border:1px solid #fbfbfb;box-sizing:border-box"></div>
<div style="left:3px;top:490px;width:13px;height:1px;background:#a0a0a0"></div>
<div class="t" style="left:56.5px;top:473px;height:17px;line-height:17px;">Wardco Windows</div>
<div class="t" style="left:191px;top:473px;height:17px;line-height:17px;">BAT0987</div>
<div class="t" style="left:264px;top:473px;height:17px;line-height:17px;">0003</div>
<div class="t" style="right:626px;top:473px;height:17px;line-height:17px;text-align:right;">1</div>
<div class="t" style="right:543px;top:473px;height:17px;line-height:17px;text-align:right;">1</div>
<div class="t" style="right:423px;top:473px;height:17px;line-height:17px;text-align:right;">0</div>
<div class="t" style="right:312px;top:473px;height:17px;line-height:17px;text-align:right;">0</div>
<div class="t" style="left:765px;top:473px;height:17px;line-height:17px;">Pending</div>
<div class="t" style="left:873.5px;top:473px;height:17px;line-height:17px;letter-spacing:-0.05px">13/9/2019</div>
<div style="left:54px;top:490px;width:925px;height:1px;background:#a0a0a0"></div>
<div style="left:3px;top:491px;width:12px;height:17px;background:#f0f0f0;border:1px solid #fbfbfb;box-sizing:border-box"></div>
<div style="left:3px;top:508px;width:13px;height:1px;background:#a0a0a0"></div>
<div class="t" style="left:56.5px;top:491px;height:17px;line-height:17px;">Wardco Windows</div>
<div class="t" style="left:191px;top:491px;height:17px;line-height:17px;">BAT0987</div>
<div class="t" style="left:264px;top:491px;height:17px;line-height:17px;">0004</div>
<div class="t" style="right:626px;top:491px;height:17px;line-height:17px;text-align:right;">1</div>
<div class="t" style="right:543px;top:491px;height:17px;line-height:17px;text-align:right;">1</div>
<div class="t" style="right:423px;top:491px;height:17px;line-height:17px;text-align:right;">0</div>
<div class="t" style="right:312px;top:491px;height:17px;line-height:17px;text-align:right;">0</div>
<div class="t" style="left:765px;top:491px;height:17px;line-height:17px;">Pending</div>
<div class="t" style="left:873.5px;top:491px;height:17px;line-height:17px;letter-spacing:-0.05px">13/9/2019</div>
<div style="left:54px;top:508px;width:925px;height:1px;background:#a0a0a0"></div>
<div style="left:3px;top:509px;width:12px;height:17px;background:#f0f0f0;border:1px solid #fbfbfb;box-sizing:border-box"></div>
<div style="left:3px;top:526px;width:13px;height:1px;background:#a0a0a0"></div>
<div class="t" style="left:56.5px;top:509px;height:17px;line-height:17px;">Wardco Windows</div>
<div class="t" style="left:191px;top:509px;height:17px;line-height:17px;">BAT0987</div>
<div class="t" style="left:264px;top:509px;height:17px;line-height:17px;">0005</div>
<div class="t" style="right:626px;top:509px;height:17px;line-height:17px;text-align:right;">1</div>
<div class="t" style="right:543px;top:509px;height:17px;line-height:17px;text-align:right;">0</div>
<div class="t" style="right:423px;top:509px;height:17px;line-height:17px;text-align:right;">0</div>
<div class="t" style="right:312px;top:509px;height:17px;line-height:17px;text-align:right;">0</div>
<div class="t" style="left:765px;top:509px;height:17px;line-height:17px;">Pending</div>
<div class="t" style="left:873.5px;top:509px;height:17px;line-height:17px;letter-spacing:-0.05px">13/9/2019</div>
<div style="left:54px;top:526px;width:925px;height:1px;background:#a0a0a0"></div>
<div style="left:188px;top:437px;width:1px;height:90px;background:#a0a0a0"></div>
<div style="left:260px;top:437px;width:1px;height:90px;background:#a0a0a0"></div>
<div style="left:356px;top:437px;width:1px;height:90px;background:#a0a0a0"></div>
<div style="left:448px;top:437px;width:1px;height:90px;background:#a0a0a0"></div>
<div style="left:531px;top:437px;width:1px;height:90px;background:#a0a0a0"></div>
<div style="left:651px;top:437px;width:1px;height:90px;background:#a0a0a0"></div>
<div style="left:762px;top:437px;width:1px;height:90px;background:#a0a0a0"></div>
<div style="left:866px;top:437px;width:1px;height:90px;background:#a0a0a0"></div>
<div style="left:978px;top:437px;width:1px;height:90px;background:#a0a0a0"></div>
<div style="left:54px;top:527px;width:925px;height:22px;background:#f0f0f0"></div>
<div style="left:3px;top:527px;width:12px;height:22px;background:#f0f0f0;border:1px solid #fbfbfb;box-sizing:border-box"></div>
<div style="left:3px;top:549px;width:13px;height:1px;background:#a0a0a0"></div>
<div style="left:358px;top:528px;width:89px;height:19px;background:#f0f0f0;border-top:1px solid #a0a0a0;border-left:1px solid #a0a0a0;border-right:1px solid #fff;border-bottom:1px solid #fff;box-sizing:border-box"></div>
<div class="t" style="right:627px;top:530px;height:17px;line-height:17px;text-align:right;">SUM=5</div>
<div style="left:450px;top:528px;width:80px;height:19px;background:#f0f0f0;border-top:1px solid #a0a0a0;border-left:1px solid #a0a0a0;border-right:1px solid #fff;border-bottom:1px solid #fff;box-sizing:border-box"></div>
<div class="t" style="right:544px;top:530px;height:17px;line-height:17px;text-align:right;">SUM=3</div>
<div style="left:533px;top:528px;width:117px;height:19px;background:#f0f0f0;border-top:1px solid #a0a0a0;border-left:1px solid #a0a0a0;border-right:1px solid #fff;border-bottom:1px solid #fff;box-sizing:border-box"></div>
<div class="t" style="right:424px;top:530px;height:17px;line-height:17px;text-align:right;">SUM=0</div>
<div style="left:653px;top:528px;width:108px;height:19px;background:#f0f0f0;border-top:1px solid #a0a0a0;border-left:1px solid #a0a0a0;border-right:1px solid #fff;border-bottom:1px solid #fff;box-sizing:border-box"></div>
<div class="t" style="right:313px;top:530px;height:17px;line-height:17px;text-align:right;">SUM=0</div>
<div style="left:35px;top:549px;width:944px;height:1px;background:#a0a0a0"></div>
<div style="left:35px;top:436px;width:18px;height:113px;background:#f0f0f0"></div>
<div style="left:53px;top:436px;width:1px;height:113px;background:#a0a0a0"></div>
<div style="left:35px;top:550px;width:1017px;height:17px;background:#f0f0f0"></div>
<div style="left:3px;top:550px;width:12px;height:17px;background:#f0f0f0;border:1px solid #fbfbfb;box-sizing:border-box"></div>
<div style="left:3px;top:567px;width:13px;height:1px;background:#a0a0a0"></div>
<div style="left:40px;top:553px;width:11px;height:11px;background:#f0f0f0;border-top:1px solid #fff;border-left:1px solid #fff;border-right:1px solid #a0a0a0;border-bottom:1px solid #a0a0a0;box-sizing:border-box"></div>
<div style="left:43px;top:558px;width:5px;height:1px;background:#000"></div>
<div class="t" style="left:56px;top:551px;height:17px;line-height:17px;">Job Order: J00286</div>
<div style="left:54px;top:567px;width:998px;height:1px;background:#a0a0a0"></div>
<div style="left:3px;top:568px;width:12px;height:17px;background:#f0f0f0;border:1px solid #fbfbfb;box-sizing:border-box"></div>
<div style="left:3px;top:585px;width:13px;height:1px;background:#a0a0a0"></div>
<div class="t" style="left:56.5px;top:568px;height:17px;line-height:17px;">Richie A Lark</div>
<div class="t" style="left:191px;top:568px;height:17px;line-height:17px;">BAT0987</div>
<div class="t" style="left:264px;top:568px;height:17px;line-height:17px;">0001</div>
<div class="t" style="right:626px;top:568px;height:17px;line-height:17px;text-align:right;">1</div>
<div class="t" style="right:543px;top:568px;height:17px;line-height:17px;text-align:right;">1</div>
<div class="t" style="right:423px;top:568px;height:17px;line-height:17px;text-align:right;">1</div>
<div class="t" style="right:312px;top:568px;height:17px;line-height:17px;text-align:right;">1</div>
<div class="t" style="left:765px;top:568px;height:17px;line-height:17px;">Completed</div>
<div class="t" style="left:873.5px;top:568px;height:17px;line-height:17px;letter-spacing:-0.05px">13/9/2019</div>
<div style="left:54px;top:585px;width:925px;height:1px;background:#a0a0a0"></div>
<div style="left:3px;top:586px;width:12px;height:17px;background:#f0f0f0;border:1px solid #fbfbfb;box-sizing:border-box"></div>
<div style="left:3px;top:603px;width:13px;height:1px;background:#a0a0a0"></div>
<div class="t" style="left:56.5px;top:586px;height:17px;line-height:17px;">Richie A Lark</div>
<div class="t" style="left:191px;top:586px;height:17px;line-height:17px;">BAT0987</div>
<div class="t" style="left:264px;top:586px;height:17px;line-height:17px;">0002</div>
<div class="t" style="right:626px;top:586px;height:17px;line-height:17px;text-align:right;">1</div>
<div class="t" style="right:543px;top:586px;height:17px;line-height:17px;text-align:right;">1</div>
<div class="t" style="right:423px;top:586px;height:17px;line-height:17px;text-align:right;">1</div>
<div class="t" style="right:312px;top:586px;height:17px;line-height:17px;text-align:right;">1</div>
<div class="t" style="left:765px;top:586px;height:17px;line-height:17px;">Completed</div>
<div class="t" style="left:873.5px;top:586px;height:17px;line-height:17px;letter-spacing:-0.05px">13/9/2019</div>
<div style="left:54px;top:603px;width:925px;height:1px;background:#a0a0a0"></div>
<div style="left:3px;top:604px;width:12px;height:17px;background:#f0f0f0;border:1px solid #fbfbfb;box-sizing:border-box"></div>
<div style="left:3px;top:621px;width:13px;height:1px;background:#a0a0a0"></div>
<div class="t" style="left:56.5px;top:604px;height:17px;line-height:17px;">Richie A Lark</div>
<div class="t" style="left:191px;top:604px;height:17px;line-height:17px;">BAT0987</div>
<div class="t" style="left:264px;top:604px;height:17px;line-height:17px;">0003</div>
<div class="t" style="right:626px;top:604px;height:17px;line-height:17px;text-align:right;">1</div>
<div class="t" style="right:543px;top:604px;height:17px;line-height:17px;text-align:right;">1</div>
<div class="t" style="right:423px;top:604px;height:17px;line-height:17px;text-align:right;">0</div>
<div class="t" style="right:312px;top:604px;height:17px;line-height:17px;text-align:right;">0</div>
<div class="t" style="left:765px;top:604px;height:17px;line-height:17px;">Pending</div>
<div class="t" style="left:873.5px;top:604px;height:17px;line-height:17px;letter-spacing:-0.05px">13/9/2019</div>
<div style="left:54px;top:621px;width:925px;height:1px;background:#a0a0a0"></div>
<div style="left:3px;top:622px;width:12px;height:17px;background:#f0f0f0;border:1px solid #fbfbfb;box-sizing:border-box"></div>
<div style="left:3px;top:639px;width:13px;height:1px;background:#a0a0a0"></div>
<div class="t" style="left:56.5px;top:622px;height:17px;line-height:17px;">Richie A Lark</div>
<div class="t" style="left:191px;top:622px;height:17px;line-height:17px;">BAT0987</div>
<div class="t" style="left:264px;top:622px;height:17px;line-height:17px;">0004</div>
<div class="t" style="right:626px;top:622px;height:17px;line-height:17px;text-align:right;">1</div>
<div class="t" style="right:543px;top:622px;height:17px;line-height:17px;text-align:right;">0</div>
<div class="t" style="right:423px;top:622px;height:17px;line-height:17px;text-align:right;">0</div>
<div class="t" style="right:312px;top:622px;height:17px;line-height:17px;text-align:right;">0</div>
<div class="t" style="left:765px;top:622px;height:17px;line-height:17px;">Pending</div>
<div class="t" style="left:873.5px;top:622px;height:17px;line-height:17px;letter-spacing:-0.05px">13/9/2019</div>
<div style="left:54px;top:639px;width:925px;height:1px;background:#a0a0a0"></div>
<div style="left:188px;top:568px;width:1px;height:72px;background:#a0a0a0"></div>
<div style="left:260px;top:568px;width:1px;height:72px;background:#a0a0a0"></div>
<div style="left:356px;top:568px;width:1px;height:72px;background:#a0a0a0"></div>
<div style="left:448px;top:568px;width:1px;height:72px;background:#a0a0a0"></div>
<div style="left:531px;top:568px;width:1px;height:72px;background:#a0a0a0"></div>
<div style="left:651px;top:568px;width:1px;height:72px;background:#a0a0a0"></div>
<div style="left:762px;top:568px;width:1px;height:72px;background:#a0a0a0"></div>
<div style="left:866px;top:568px;width:1px;height:72px;background:#a0a0a0"></div>
<div style="left:978px;top:568px;width:1px;height:72px;background:#a0a0a0"></div>
<div style="left:54px;top:640px;width:925px;height:22px;background:#f0f0f0"></div>
<div style="left:3px;top:640px;width:12px;height:22px;background:#f0f0f0;border:1px solid #fbfbfb;box-sizing:border-box"></div>
<div style="left:3px;top:662px;width:13px;height:1px;background:#a0a0a0"></div>
<div style="left:358px;top:641px;width:89px;height:19px;background:#f0f0f0;border-top:1px solid #a0a0a0;border-left:1px solid #a0a0a0;border-right:1px solid #fff;border-bottom:1px solid #fff;box-sizing:border-box"></div>
<div class="t" style="right:627px;top:643px;height:17px;line-height:17px;text-align:right;">SUM=4</div>
<div style="left:450px;top:641px;width:80px;height:19px;background:#f0f0f0;border-top:1px solid #a0a0a0;border-left:1px solid #a0a0a0;border-right:1px solid #fff;border-bottom:1px solid #fff;box-sizing:border-box"></div>
<div class="t" style="right:544px;top:643px;height:17px;line-height:17px;text-align:right;">SUM=3</div>
<div style="left:533px;top:641px;width:117px;height:19px;background:#f0f0f0;border-top:1px solid #a0a0a0;border-left:1px solid #a0a0a0;border-right:1px solid #fff;border-bottom:1px solid #fff;box-sizing:border-box"></div>
<div class="t" style="right:424px;top:643px;height:17px;line-height:17px;text-align:right;">SUM=2</div>
<div style="left:653px;top:641px;width:108px;height:19px;background:#f0f0f0;border-top:1px solid #a0a0a0;border-left:1px solid #a0a0a0;border-right:1px solid #fff;border-bottom:1px solid #fff;box-sizing:border-box"></div>
<div class="t" style="right:313px;top:643px;height:17px;line-height:17px;text-align:right;">SUM=2</div>
<div style="left:35px;top:662px;width:944px;height:1px;background:#a0a0a0"></div>
<div style="left:35px;top:567px;width:18px;height:95px;background:#f0f0f0"></div>
<div style="left:53px;top:567px;width:1px;height:95px;background:#a0a0a0"></div>
<div style="left:1px;top:645px;width:1070px;height:28px;background:#f0f0f0"></div>
<div style="left:2px;top:645px;width:1067px;height:1px;background:#fff"></div>
<div style="left:2px;top:646px;width:1067px;height:1px;background:#f6f6f6"></div>
<div style="left:3px;top:646px;width:1px;height:25px;background:#fff"></div>
<div style="left:2px;top:670px;width:1067px;height:1px;background:#a0a0a0"></div>
<div style="left:2px;top:671px;width:1068px;height:1px;background:#ececec"></div>
<div style="left:1052px;top:152px;width:17px;height:493px;background:#fff conic-gradient(#f0f0f0 25%,#fff 0 50%,#f0f0f0 0 75%,#fff 0) 0 0/2px 2px"></div>
<div style="left:1052px;top:152px;width:17px;height:17px;background:#f0f0f0;border-top:1px solid #fff;border-left:1px solid #fff;border-right:1px solid #a0a0a0;border-bottom:1px solid #a0a0a0;box-sizing:border-box"></div>
<div style="left:1052px;top:169px;width:17px;height:301px;background:#f0f0f0;border-top:1px solid #fff;border-left:1px solid #fff;border-right:1px solid #a0a0a0;border-bottom:1px solid #a0a0a0;box-sizing:border-box"></div>
<div style="left:1052px;top:628px;width:17px;height:17px;background:#f0f0f0;border-top:1px solid #fff;border-left:1px solid #fff;border-right:1px solid #a0a0a0;border-bottom:1px solid #a0a0a0;box-sizing:border-box"></div>
<svg class="a" style="left:1057px;top:158px" width="7" height="4" viewBox="0 0 7 4"><path d="M0 4 L3.5 0 L7 4Z" fill="#000"/></svg>
<svg class="a" style="left:1057px;top:635px" width="7" height="4" viewBox="0 0 7 4"><path d="M0 0 L3.5 4 L7 0Z" fill="#000"/></svg>
<div style="left:1068px;top:645px;width:1px;height:26px;background:#a0a0a0"></div>
<div style="left:1069px;top:81px;width:1px;height:591px;background:#e0e0e0"></div>
<div style="left:1070px;top:80px;width:1px;height:592px;background:#fff"></div>
<div style="left:1px;top:80px;width:1px;height:592px;background:#9c9c9c"></div>
<div style="left:1px;top:672px;width:1070px;height:1px;background:#fff"></div>
<div style="left:0px;top:0px;width:1px;height:674px;background:#555"></div>
<div style="left:0px;top:0px;width:1072px;height:1px;background:#5a5a5a"></div>
<div style="left:1071px;top:0px;width:1px;height:674px;background:#555"></div>
<div style="left:0px;top:673px;width:1072px;height:1px;background:#555"></div>
</div></body></html>
